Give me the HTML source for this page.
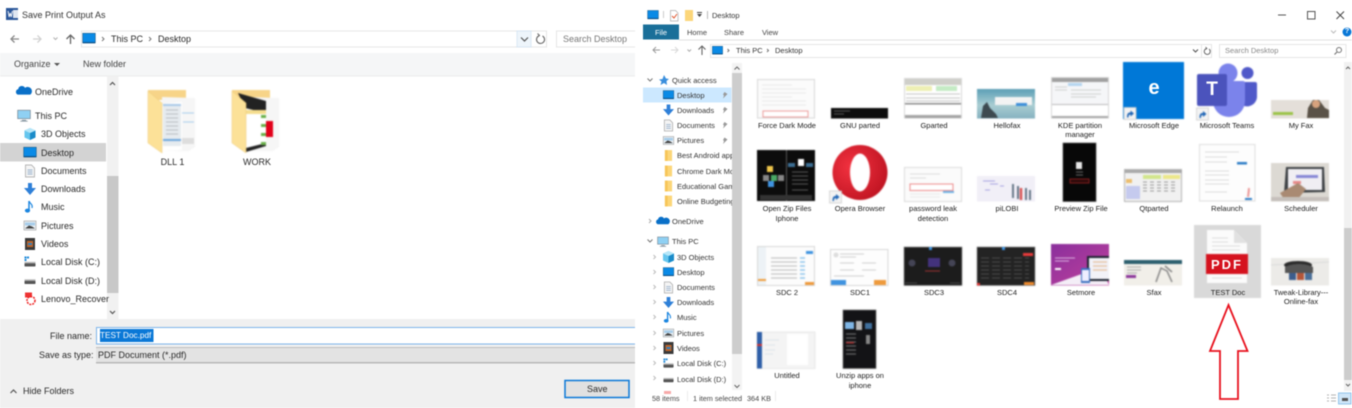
<!DOCTYPE html>
<html lang="en"><head><meta charset="utf-8"><title>Save Print Output As</title>
<style>
html,body{margin:0;padding:0;background:#fff}
#r{position:relative;width:1352px;height:408px;overflow:hidden;background:#fff;font-family:"Liberation Sans",sans-serif;filter:blur(.4px)}
svg{position:absolute;left:0;top:0}
.t{position:absolute;white-space:nowrap;line-height:0;color:#2a2a2a;margin-top:1px}
.a{font-size:9px;margin-top:.2px}
.b{font-size:7.5px;color:#333}
.c{font-size:7.5px;color:#222;transform:translateX(-50%)}
.s{filter:blur(.45px)}
</style></head><body><div id="r">
<svg width="1352" height="408" viewBox="0 0 1352 408" fill="none">
<defs>
<g id="mon"><rect x="-6" y="-5" width="12" height="9" fill="#0a8ae6"/><rect x="-6" y="-5" width="12" height="9" stroke="#22628f" stroke-width=".6"/><rect x="-6" y="3.4" width="12" height="1.2" fill="#0b4f86"/></g>
<g id="dl"><path d="M-2-6h4v5h4L0 6-6-1h4z" fill="#2f80d8"/></g>
<g id="doc"><path d="M-4.5-6h6l3 3v9h-9z" fill="#f4f4f4" stroke="#a0a0a0" stroke-width=".7"/><path d="M-2.5-1h5M-2.5 1h5M-2.5 3h5" stroke="#7a9cc0" stroke-width=".7"/></g>
<g id="pic"><rect x="-6" y="-4.5" width="12" height="9" fill="#e8eef2" stroke="#9a9a9a" stroke-width=".6"/><path d="M-5-3h10v3h-10z" fill="#a7cdea"/><path d="M-5 3l4-3 3 1 3 2z" fill="#444"/></g>
<g id="mus"><path d="M-1-6v9" stroke="#1c86e0" stroke-width="1.5"/><ellipse cx="-2.5" cy="3.6" rx="2.6" ry="2" fill="#1c86e0"/><path d="M-1-6c1 3 4 3 3 7" stroke="#1c86e0" stroke-width="1.2"/></g>
<g id="vid"><rect x="-5" y="-6" width="10" height="12" fill="#3a3a3a"/><rect x="-3" y="-3" width="6" height="6" fill="#c0662a"/><path d="M-2-1h4v2h-4z" fill="#2d7fc1"/></g>
<g id="dc"><rect x="-5.5" y="1" width="11" height="3.5" rx=".8" fill="#555"/><rect x="-5.5" y="-.2" width="11" height="1.5" fill="#bbb"/><path d="M-5.5-5.5h2v2h-2zM-3-5.5h2v2h-2zM-5.5-3h2v2h-2z" fill="#1d88d8"/></g>
<g id="dd"><rect x="-5.5" y="0" width="11" height="3.5" rx=".8" fill="#555"/><rect x="-5.5" y="-1.2" width="11" height="1.5" fill="#bbb"/></g>
<g id="cube"><path d="M0-6l5.5 2.5v7L0 6l-5.5-2.5v-7z" fill="#66c6ee"/><path d="M0-1v7l5.5-2.500v-7z" fill="#1a8bc9"/><path d="M0-1L-5.500-3.500 0-6l5.500 2.500z" fill="#b6e6f8"/></g>
<g id="cl"><path d="M-6 3a2.800 2.800 0 0 1 .5-5.300A3.500 3.500 0 0 1 1-3.500 3 3 0 0 1 6 3z" fill="#0a70c8"/></g>
<g id="pc"><rect x="-6" y="-5" width="12" height="8" fill="#8fd0f3" stroke="#7c8a95" stroke-width=".7"/><path d="M-2 4h4v1h-4zM-3.500 5h7v.8h-7z" fill="#8a9aa5"/></g>
<g id="yf"><path d="M-4-6h8v12h-8z" fill="#fcd679"/><path d="M-4-6h3v12h-3z" fill="#f7c558"/></g>
<g id="sc"><rect x="0" y="0" width="12" height="12" fill="#f3f3f3" stroke="#c9c9c9" stroke-width=".7"/><path d="M3 10c0-4 1-5 3.500-5V3L10 6 6.500 9V7c-1.500 0-2 1-2 3z" fill="#1f65b5"/></g>
<g id="pin"><path d="M-1.500-3l3 2-2 2 -2.500 2.500 1-3-1-1z" fill="#9a9a9a"/></g>
</defs>

<!-- LEFT DIALOG -->
<rect x="6" y="8" width="12" height="12" fill="#2b579a"/><rect x="13" y="10" width="5" height="8" fill="#fff" opacity=".85"/><path d="M8 11l1.200 6 1-4 1 4 1.200-6" stroke="#fff" stroke-width=".9"/>
<path d="M19 39h-8m3.500-3.500L11 39l3.500 3.500" stroke="#8a8a8a" stroke-width="1.300"/>
<path d="M33 39h8m-3.500-3.500L41 39l-3.500 3.500" stroke="#d2d2d2" stroke-width="1.300"/>
<path d="M53.500 37.500l2 2 2-2" stroke="#b0b0b0"/>
<path d="M70.500 44v-9m-4 4l4-4 4 4" stroke="#666" stroke-width="1.300"/>
<rect x="81.500" y="31" width="465" height="16" stroke="#e6e6e6" fill="#fff"/>
<use href="#mon" transform="translate(89,38.500) scale(1.050)"/>
<path d="M102 37l2 2-2 2M149 37l2 2-2 2" stroke="#777"/>
<rect x="517" y="31" width="14" height="16" fill="#eef5fb" stroke="#cfe2f2" stroke-width=".7"/>
<path d="M521 37.500l3.500 3.500 3.500-3.500" stroke="#555" stroke-width="1.200"/>
<path d="M542.500 36a4 4 0 1 1-3.500-.2" stroke="#666" stroke-width="1.100"/><path d="M537.500 33.500l2 2-2 1.500" stroke="#666"/>
<rect x="556.500" y="31" width="79" height="16" stroke="#e6e6e6" fill="#fff"/>
<rect x="0" y="53" width="635" height="23" fill="#f5f6f7"/><rect x="0" y="75.500" width="635" height="1" fill="#ebebeb"/>
<path d="M54 63h6l-3 3z" fill="#555"/>
<rect x="0" y="143" width="106" height="18.500" fill="#d3d3d3"/>
<rect x="107" y="76" width="11.500" height="243" fill="#f1f1f1"/><rect x="107" y="176" width="11.500" height="117" fill="#c8c8c8"/>
<path d="M110 85l2.500-2.500 2.500 2.500M110 311l2.500 2.500 2.500-2.500" stroke="#555" stroke-width="1.200"/>
<use href="#cl" transform="translate(24,91.500) scale(1.050)"/>
<use href="#pc" transform="translate(24,115.500) scale(1.050)"/>
<use href="#cube" transform="translate(30,134)"/>
<use href="#mon" transform="translate(30,152.500) scale(1.050)"/>
<use href="#doc" transform="translate(30,171)"/>
<use href="#dl" transform="translate(30,189)"/>
<use href="#mus" transform="translate(30,207)"/>
<use href="#pic" transform="translate(30,225.500)"/>
<use href="#vid" transform="translate(30,244)"/>
<use href="#dc" transform="translate(30,262)"/>
<use href="#dd" transform="translate(30,280.500)"/>
<g transform="translate(30,298.500)"><rect x="-5" y="-6" width="7" height="5" fill="#e33"/><circle cx="1" cy="2" r="4" stroke="#e22" stroke-width="1.500" stroke-dasharray="2 1"/></g>

<!-- folders -->
<g class="s">
<path d="M148 90h38v10h-38z" fill="#f7d488"/>
<path d="M162 97l33 1v49l-6 4h-27z" fill="#f6f6f6"/>
<path d="M162 104l20-2v48l-20 1z" fill="#fff"/>
<path d="M163 104h18v42h-18z" fill="#e6ebef"/>
<path d="M163 104h18v2h-18z" fill="#a9c9e8"/><path d="M163 139h18v2h-18z" fill="#6fa7dc"/>
<path d="M166 110h12M166 114h12M166 118h12M166 122h12M166 126h12M166 130h12M166 134h12" stroke="#b8bcc0" stroke-width="1"/>
<path d="M182 113h12M183 122h11" stroke="#a8cdee" stroke-width="1"/><rect x="182" y="138" width="12" height="6" fill="#ddd"/>
<path d="M148 91l14 12v50l-14-10z" fill="#fce198"/><path d="M148 91l14 12v50l-14-10z" stroke="#ecc978" stroke-width=".5"/>
</g>
<g class="s">
<path d="M232 90h38v10h-38z" fill="#f7d488"/>
<path d="M246 97l33 1v49l-6 4h-27z" fill="#f6f6f6"/>
<path d="M238 93l28 8v12l-21-5z" fill="#222"/>
<path d="M246 109l20 4v30l-20 6z" fill="#fff"/>
<rect x="246" y="110" width="20" height="4" fill="#f5dd8e"/><path d="M246 148l20-5v3l-20 6z" fill="#222"/>
<rect x="261" y="115" width="5" height="3" fill="#6ab04a"/><rect x="261" y="124" width="5" height="3" fill="#6ab04a"/><rect x="261" y="133" width="5" height="3" fill="#6ab04a"/><rect x="261" y="142" width="5" height="3" fill="#6ab04a"/>
<rect x="266" y="121" width="7" height="16" fill="#e2001a"/>
<path d="M232 91l14 12v50l-14-10z" fill="#fce198"/><path d="M232 91l14 12v50l-14-10z" stroke="#ecc978" stroke-width=".5"/>
</g>

<!-- bottom panel -->
<rect x="0" y="319" width="635" height="89" fill="#f0f0f0"/>
<rect x="96.500" y="327.500" width="539" height="16.500" fill="#fff" stroke="#7eb4ea"/>
<rect x="100" y="329" width="53.500" height="13" fill="#0a78d7"/>
<rect x="96" y="347" width="539" height="16" fill="#e3e3e3"/><rect x="96" y="347" width="539" height="1" fill="#bdbdbd"/><rect x="96" y="362" width="539" height="1.500" fill="#b8b8b8"/>
<path d="M10.500 393l3-3 3 3" stroke="#555" stroke-width="1.200"/>
<rect x="565" y="380.500" width="64" height="17" fill="#e1e1e1" stroke="#0a78d7" stroke-width="1.500"/>

<!-- RIGHT WINDOW -->
<rect x="635" y="0" width="717" height="408" fill="#fff"/>
<use href="#mon" transform="translate(653,15) scale(.9)"/>
<rect x="663" y="11" width="1" height="7" fill="#ccc"/>
<path d="M670.500 10.500h5l2.500 2.500v8h-7.500z" fill="#fff" stroke="#aaa" stroke-width=".7"/><path d="M672 16l2 2 3-4" stroke="#e0552d"/>
<rect x="685" y="10" width="8" height="11" fill="#fcd679"/>
<path d="M697 14h5l-2.500 3z" fill="#444"/><rect x="697" y="12" width="5" height="1" fill="#444"/>
<rect x="707" y="11" width="1" height="8" fill="#bbb"/>
<rect x="643" y="24.500" width="36" height="15" fill="#1a6f99"/>
<rect x="679" y="39.500" width="673" height="1" fill="#e1e1e1"/>
<path d="M1278 15h8" stroke="#555" stroke-width="1"/>
<rect x="1307.500" y="11.500" width="7.500" height="7.500" stroke="#555"/>
<path d="M1336.500 11.500l7.500 7.500m0-7.500l-7.500 7.500" stroke="#444" stroke-width="1"/>
<path d="M1331 30.500l2.500 2.500 2.500-2.500" stroke="#bbb"/>
<circle cx="1347" cy="32" r="4.500" fill="#0a78d7"/>
<path d="M660 50h-7m3-3l-3 3 3 3" stroke="#9a9a9a"/>
<path d="M671 50h7m-3-3l3 3-3 3" stroke="#d8d8d8"/>
<path d="M687.500 49.500l1.800 1.800 1.800-1.800" stroke="#aaa"/>
<path d="M702 55v-9m-3.500 3.500l3.500-3.500 3.500 3.500" stroke="#666" stroke-width="1.100"/>
<rect x="710.500" y="44.500" width="491" height="13" stroke="#e6e6e6" fill="#fff"/>
<rect x="1201.500" y="44.500" width="10" height="13" stroke="#e6e6e6" fill="#fff"/>
<use href="#mon" transform="translate(717.500,50.500) scale(.85)"/>
<path d="M727.500 49l1.500 1.500-1.500 1.500M767 49l1.500 1.500-1.500 1.500" stroke="#777"/>
<path d="M1193 49.500l2.500 2.500 2.500-2.500" stroke="#555" stroke-width="1.100"/>
<path d="M1209 49a3 3 0 1 1-2.500-.5" stroke="#666"/><path d="M1205.500 47l1.500 1.500-1.500 1" stroke="#666" stroke-width=".8"/>
<rect x="1219.500" y="44.500" width="126.500" height="13" stroke="#e6e6e6" fill="#fff"/>
<circle cx="1339" cy="50" r="2.500" stroke="#777"/><path d="M1337 52l-2.500 2.500" stroke="#777" stroke-width="1.200"/>
<rect x="643" y="87.500" width="88.500" height="15" fill="#cce8ff"/>
<rect x="732" y="63" width="10" height="327" fill="#f3f3f3"/><rect x="732" y="73" width="10" height="281" fill="#cdcdcd"/>
<path d="M734.500 69.500l2.500-2.500 2.500 2.500M734.500 385l2.500 2.500 2.500-2.500" stroke="#666"/>
<path d="M647.500 78.500l2.500 2.500 2.500-2.500M647.500 239.500l2.500 2.500 2.500-2.500" stroke="#777"/>
<path d="M649 219l2 2-2 2" stroke="#aaa"/>
<g stroke="#bbb"><path d="M653.500 255l2 2-2 2M653.500 270l2 2-2 2M653.500 285l2 2-2 2M653.500 300l2 2-2 2M653.500 315l2 2-2 2M653.500 331l2 2-2 2M653.500 346l2 2-2 2M653.500 361l2 2-2 2M653.500 376l2 2-2 2"/></g>
<path d="M664 75l2 3.500 3 .5-2.500 2 .5 4-3-2-3.500 2 1-3.500-2.500-2 3.500-.5z" fill="#3a8fdd"/>
<use href="#mon" transform="translate(668.500,95) scale(.88)"/>
<use href="#dl" transform="translate(668.500,110) scale(.92)"/>
<use href="#doc" transform="translate(668.500,125.500) scale(.92)"/>
<use href="#pic" transform="translate(668.500,140.500) scale(.88)"/>
<use href="#yf" transform="translate(668.500,155.500) scale(.9)"/>
<use href="#yf" transform="translate(668.500,171) scale(.9)"/>
<use href="#yf" transform="translate(668.500,186) scale(.9)"/>
<use href="#yf" transform="translate(668.500,201) scale(.9)"/>
<use href="#pin" transform="translate(726,95)"/><use href="#pin" transform="translate(726,110)"/><use href="#pin" transform="translate(726,125)"/><use href="#pin" transform="translate(726,140.500)"/>
<use href="#cl" transform="translate(663,221.500) scale(.9)"/>
<use href="#pc" transform="translate(663,241.500) scale(.9)"/>
<use href="#cube" transform="translate(668.500,257)"/>
<use href="#mon" transform="translate(668.500,272) scale(.88)"/>
<use href="#doc" transform="translate(668.500,287.500) scale(.92)"/>
<use href="#dl" transform="translate(668.500,302.500) scale(.92)"/>
<use href="#mus" transform="translate(668.500,317.500) scale(.92)"/>
<use href="#pic" transform="translate(668.500,333) scale(.88)"/>
<use href="#vid" transform="translate(668.500,348)"/>
<use href="#dc" transform="translate(668.500,363.500) scale(.92)"/>
<use href="#dd" transform="translate(668.500,379) scale(.92)"/>
<g transform="translate(664,391)"><rect x="0" y="0" width="7" height="3" fill="#f7a9a9"/></g>
<rect x="687" y="391" width="1" height="10" fill="#ececec"/><rect x="775" y="391" width="1" height="10" fill="#ececec"/>

<!-- right scrollbar -->
<rect x="1344" y="62" width="8" height="329" fill="#f1f1f1"/><rect x="1344" y="228" width="8" height="152" fill="#cdcdcd"/>
<path d="M1346 69l2-2 2 2M1346 384l2 2 2-2" stroke="#666"/>
<g stroke="#999" stroke-width=".8"><path d="M1327 395h2M1327 398h2M1327 401h2M1331 395h5M1331 398h5M1331 401h5"/></g>
<rect x="1338.500" y="393" width="12.500" height="11" fill="#cfe6f8" stroke="#7fb9e6" stroke-width=".8"/><path d="M1342 398h6v3h-6z" fill="#555"/>

<g class="s">
<!-- ROW 1 -->
<g stroke="#d8d8d8" stroke-width="1">
<rect x="757.500" y="79.500" width="57" height="38.500" fill="#fbfbfb"/>
<rect x="904.500" y="78.500" width="57" height="39.500" fill="#fff"/>
<rect x="1051.500" y="77.500" width="57" height="40.500" fill="#fff"/>
</g>
<path d="M762 85h30M762 89h44M762 93h44M762 97h30M762 101h44M762 105h44" stroke="#e8e8e8"/>
<rect x="763" y="111" width="45" height="6" stroke="#ec9c9b" fill="#fff"/>
<rect x="831" y="108" width="57" height="10.500" fill="#0d0d0d"/><path d="M834 111h16M834 114h10" stroke="#555"/>
<rect x="905" y="79" width="56" height="6" fill="#cfcfc9"/><rect x="906" y="86" width="26" height="5" fill="#eef0b4"/><rect x="936" y="86" width="21" height="5" fill="#c5ebc5"/>
<path d="M906 94h54M906 98h54M906 101h54" stroke="#c4c4c4"/><rect x="905" y="103" width="56" height="1.500" fill="#888"/><rect x="905" y="115" width="56" height="3" fill="#a5a5a5"/>
<defs><linearGradient id="hf" x1="0" y1="0" x2="0" y2="1"><stop offset="0" stop-color="#5c9fb6"/><stop offset=".55" stop-color="#a9cdd2"/><stop offset="1" stop-color="#86b2c0"/></linearGradient></defs>
<rect x="977" y="89" width="58" height="29.500" fill="url(#hf)"/>
<rect x="995" y="97" width="37" height="8" fill="#f3f3f3"/><rect x="1016" y="103" width="11" height="3" fill="#3f8fd9"/><path d="M981 118l2-12 4-4 3 6 6 6 2 4z" fill="#3d4a50"/>
<rect x="1052" y="78" width="56" height="4" fill="#a0a0a0"/><rect x="1052" y="82" width="56" height="22" fill="#f5f6f8"/><rect x="1068" y="83" width="14" height="3" fill="#b6d6f0"/><path d="M1055 87h12M1055 90h12M1071 90h30M1071 94h30M1071 97h25" stroke="#d0d0d0"/><rect x="1052" y="104" width="56" height="1" fill="#bbb"/><rect x="1052" y="116" width="56" height="2" fill="#aaa"/>
<rect x="1123" y="62" width="61" height="57" fill="#0078d7"/>
<use href="#sc" transform="translate(1124,107.500)"/>
<rect x="1271" y="100" width="58" height="18.500" fill="#e4dfd9"/><rect x="1273" y="112" width="20" height="3" fill="#9cc44a"/><path d="M1307 118l1-10 5-8h6l6 8 4 2v8z" fill="#5a5247"/><circle cx="1316" cy="104" r="4" fill="#d6a27e"/>
<!-- teams -->
<circle cx="1247.500" cy="73" r="6" fill="#5059c9"/>
<path d="M1242 82h13a2 2 0 0 1 2 2v13a10 10 0 0 1-15 8z" fill="#5059c9"/>
<circle cx="1228" cy="73" r="9.500" fill="#7b83eb"/>
<path d="M1213 81h30a2 2 0 0 1 2 2v18a16 16 0 0 1-32 0z" fill="#7b83eb"/>
<rect x="1197" y="74" width="30" height="32" rx="2" fill="#4b53bc"/>
<use href="#sc" transform="translate(1196.500,108)"/>

<!-- ROW 2 -->
<rect x="757" y="150" width="58" height="51" fill="#0c0c0c"/><rect x="786" y="150" width="1" height="51" fill="#555"/>
<rect x="767" y="166" width="6" height="6" fill="#f1c84c"/><rect x="763" y="175" width="6" height="6" fill="#888"/><rect x="771" y="175" width="6" height="6" fill="#4aa866"/><rect x="778" y="175" width="6" height="6" fill="#888"/><rect x="768" y="181" width="6" height="6" fill="#3f93e0"/><rect x="798" y="159" width="6" height="7" fill="#fff"/><rect x="788" y="163" width="7" height="4" fill="#3b6d92"/><rect x="806" y="163" width="7" height="4" fill="#3b6d92"/><path d="M792 172h16M792 176h16M792 180h16M792 184h16M792 190h16" stroke="#555"/><rect x="760" y="195" width="52" height="5" fill="#333"/>
<defs><radialGradient id="op" cx=".35" cy=".4" r=".8"><stop offset="0" stop-color="#f33240"/><stop offset="1" stop-color="#b70f1d"/></radialGradient></defs>
<ellipse cx="860" cy="172.500" rx="27.500" ry="27.500" fill="url(#op)"/>
<ellipse cx="860" cy="172.500" rx="10" ry="19" fill="#fff"/>
<use href="#sc" transform="translate(829.500,191)"/>
<rect x="904.500" y="167.500" width="57" height="34" fill="#fbfbfb" stroke="#dcdcdc"/>
<path d="M910 174h30M910 178h16" stroke="#ddd"/><rect x="910" y="184" width="43" height="6.500" fill="#fff" stroke="#ec8b8b"/><rect x="943" y="191" width="11" height="2" fill="#6fb3e6"/><path d="M910 194h30M910 197h30" stroke="#e8e8e8"/>
<rect x="977" y="176" width="58" height="25.500" fill="#f1eff7"/>
<path d="M983 181h12M990 184h8M985 190h5M1000 186h4" stroke="#a8a4e2"/><path d="M1013 184v14M1018 186v13M1026 188v12M1030 190v10" stroke="#678" stroke-width="2"/><path d="M1021 188v12" stroke="#d85555" stroke-width="2.500"/>
<rect x="1063" y="143" width="33" height="58.500" fill="#080808" stroke="#444" stroke-width=".6"/>
<rect x="1076" y="162" width="6" height="7" fill="#e8e8e8"/><path d="M1076 172h7M1076 175h7" stroke="#666"/><rect x="1070" y="179" width="19" height="4" stroke="#9b2222" fill="#2a0a0a" stroke-width=".8"/>
<rect x="1124.500" y="169.500" width="57" height="32" fill="#f1f1f1" stroke="#b5b5b5"/>
<rect x="1125" y="170" width="57" height="3" fill="#a9a9a9"/><rect x="1143" y="175" width="18" height="4" fill="#d2e68c"/><rect x="1163" y="175" width="17" height="4" fill="#ece88a"/><rect x="1126" y="186" width="14" height="13" fill="#c5caee"/><rect x="1126" y="179" width="6" height="4" fill="#ecbe6e"/><path d="M1143 182h34M1143 185h34M1143 188h34M1143 191h34" stroke="#999" stroke-dasharray="4 3"/>
<rect x="1199.500" y="144.500" width="55.500" height="56.500" fill="#fdfdfd" stroke="#dedede"/>
<path d="M1205 152h34M1205 157h22M1205 162h22M1205 171h24M1205 175h24M1205 180h24M1205 184h24M1205 192h22" stroke="#dcdcdc"/><rect x="1237" y="162" width="10" height="2.500" fill="#2f7ec7"/><path d="M1249 190l-1 7 1-9" stroke="#ec9b9b" stroke-width="2"/><rect x="1245" y="198" width="7" height="2" fill="#2f7ec7"/>
<rect x="1271" y="163" width="58" height="38.500" fill="#dcd9d3"/><path d="M1286 167h38l1 25-41 1z" fill="#3e4245"/><path d="M1288 169h34v21h-34z" fill="#f0eef3"/><rect x="1296" y="175" width="22" height="3" fill="#8888d6"/><rect x="1293" y="181" width="8" height="3" fill="#e88a8a"/><path d="M1280 193l18-10 8 6-8 10h-14z" fill="#a98a73"/><rect x="1271" y="197" width="58" height="4" fill="#c5c0bb"/>

<!-- ROW 3 -->
<rect x="757.500" y="246.500" width="57" height="39" fill="#fcfcfc" stroke="#d8d8d8"/>
<rect x="758" y="247" width="8" height="38" fill="#edf2f6"/><rect x="758" y="279" width="8" height="2" fill="#f0a040"/><path d="M771 258h26M771 262h26M771 266h26M771 270h26M771 274h26M771 278h26" stroke="#c4c4c4" stroke-width="1.200"/><path d="M800 258h5M800 262h5M800 266h5M800 270h5M800 274h5M800 278h5" stroke="#8fc5ec" stroke-width="1.500"/><rect x="805" y="282" width="9" height="3" fill="#ee9a3c"/><rect x="806" y="251" width="7" height="3" fill="#3f93e0"/>
<rect x="830.500" y="249.500" width="57.500" height="36" fill="#fdfdfd" stroke="#d8d8d8"/>
<rect x="831" y="280" width="15" height="5" fill="#3f93e0"/><rect x="874" y="280" width="12" height="5" fill="#ee9a3c"/><path d="M840 254h24M840 257h16M840 263h14M862 263h14M840 270h14M862 270h14M834 276h30" stroke="#d0d0d0"/><circle cx="836" cy="255" r="2.500" fill="#ddd"/>
<rect x="904" y="247" width="58" height="38.500" fill="#1c1c1c" stroke="#8a8a8a" stroke-width=".6"/>
<rect x="928" y="258" width="12" height="9" fill="#43327c"/><circle cx="912" cy="263" r="3.500" fill="#445"/><circle cx="952" cy="263" r="3.500" fill="#445"/><rect x="929" y="247" width="3" height="3" fill="#3f93e0"/><path d="M925 271h15" stroke="#933"/><path d="M905 283h12M950 283h10" stroke="#444"/>
<rect x="977" y="247" width="58" height="38.500" fill="#232323" stroke="#8a8a8a" stroke-width=".6"/>
<path d="M981 258h48M981 262h48M981 266h48M981 270h48M981 274h48M981 278h48" stroke="#4a4a4a" stroke-dasharray="8 3"/><rect x="1023" y="253" width="10" height="3" fill="#e63a3a"/><rect x="1024" y="282" width="10" height="3" fill="#ee8a2c"/><rect x="1002" y="247" width="3" height="3" fill="#3f93e0"/><rect x="977" y="283" width="3" height="2.500" fill="#e63a3a"/>
<defs><linearGradient id="sm" x1="0" y1="0" x2="1" y2="1"><stop offset="0" stop-color="#8a2f9c"/><stop offset="1" stop-color="#c0419c"/></linearGradient></defs>
<rect x="1051" y="244" width="58" height="41.500" fill="url(#sm)"/><path d="M1051 285l50-18 8 18z" fill="#f4eef7"/>
<rect x="1087" y="256" width="22" height="25" fill="#1d2330"/><rect x="1089" y="258" width="20" height="21" fill="#f2f2f8"/><rect x="1081" y="268" width="9" height="15" fill="#3a6fc0"/><rect x="1082" y="270" width="7" height="11" fill="#eef"/><path d="M1055 258h20M1055 261h14" stroke="#d9b0e0"/><rect x="1055" y="268" width="6" height="2" fill="#fff"/><path d="M1093 262h14M1093 266h14M1093 270h14" stroke="#e8c5a8" stroke-width="1.500"/>
<rect x="1124" y="260" width="58" height="25.500" fill="#f1efe9"/><rect x="1124" y="260" width="58" height="4" fill="#2d5f6e"/><rect x="1126" y="275" width="10" height="3" fill="#8d3a9c"/><path d="M1127 267h14M1127 270h14M1127 273h10" stroke="#aaa"/><path d="M1156 282l5-14 6 3 5 11M1165 266l7 6" stroke="#888" stroke-width="1.500"/>
<!-- selected PDF -->
<rect x="1194" y="225" width="67" height="73" fill="#d9d9d9"/>
<path d="M1207 230h27l13 13v40h-40z" fill="#fbfbfb"/><path d="M1234 230l13 13h-13z" fill="#e1e1e1"/>
<path d="M1212 238h16M1212 242h16M1212 246h28M1212 250h28M1212 278h30" stroke="#dcdcdc"/>
<rect x="1206" y="254" width="42" height="20" fill="#d5121e"/>
<rect x="1271" y="258" width="58" height="27.500" fill="#ecebe8"/><path d="M1271 265l58-3" stroke="#dbdbdb"/>
<ellipse cx="1298" cy="265" rx="14" ry="4" fill="#2b2b2b"/><path d="M1285 267c8-4 20-4 28 0v6h-28z" fill="#555"/>
<rect x="1289" y="273" width="7" height="7" fill="#3d5d8c"/><rect x="1297" y="273" width="7" height="7" fill="#b4563a"/><rect x="1305" y="273" width="7" height="7" fill="#4a6e98"/>

<!-- ROW 4 -->
<rect x="757" y="332" width="58" height="36.500" fill="#f4f4f4" stroke="#dcdcdc" stroke-width=".6"/><rect x="757" y="332" width="5" height="36.500" fill="#2f5fa8"/><rect x="757" y="344" width="5" height="2" fill="#c33"/><rect x="787" y="334" width="21" height="31" fill="#fff"/><path d="M765 340h14M765 345h10M765 350h10M765 354h8" stroke="#dde4ea"/>
<rect x="843" y="310" width="33" height="58.500" fill="#131316" stroke="#666" stroke-width=".6"/>
<rect x="845" y="322" width="9" height="7" fill="#7fb6e6"/><rect x="856" y="321" width="6" height="9" fill="#b8b8b8"/><rect x="865" y="323" width="7" height="6" fill="#3f6f9c"/>
<path d="M846 334h10M846 338h10M846 342h10M846 346h10M846 350h10M846 354h10" stroke="#666" stroke-width="1.200"/><rect x="866" y="335" width="4" height="9" fill="#888"/><rect x="846" y="342" width="8" height="1.500" fill="#a33"/>
</g>
<!-- arrow -->
<path d="M1228.500 305L1247.500 351H1238V399H1220V351H1210z" fill="#fff" stroke="#e8121e" stroke-width="1.800"/>
</svg>

<!-- LEFT TEXT -->
<div class="t a" style="left:22px;top:15px;color:#333">Save Print Output As</div>
<div class="t a" style="left:111px;top:39px">This PC</div>
<div class="t a" style="left:158px;top:39px">Desktop</div>
<div class="t a" style="left:563px;top:39px;color:#777">Search Desktop</div>
<div class="t a" style="left:14px;top:64px;color:#444">Organize</div>
<div class="t a" style="left:83px;top:64px;color:#444">New folder</div>
<div class="t a" style="left:35px;top:91.500px">OneDrive</div>
<div class="t a" style="left:35px;top:115.500px">This PC</div>
<div class="t a" style="left:41px;top:134px">3D Objects</div>
<div class="t a" style="left:41px;top:152.500px">Desktop</div>
<div class="t a" style="left:41px;top:171px">Documents</div>
<div class="t a" style="left:41px;top:189px">Downloads</div>
<div class="t a" style="left:41px;top:207px">Music</div>
<div class="t a" style="left:41px;top:225.500px">Pictures</div>
<div class="t a" style="left:41px;top:244px">Videos</div>
<div class="t a" style="left:41px;top:262px">Local Disk (C:)</div>
<div class="t a" style="left:41px;top:280.500px">Local Disk (D:)</div>
<div class="t a" style="left:41px;top:298.500px">Lenovo_Recover</div>
<div class="t a" style="left:172.500px;top:161.500px;transform:translateX(-50%)">DLL 1</div>
<div class="t a" style="left:257px;top:161.500px;transform:translateX(-50%)">WORK</div>
<div class="t a" style="left:50px;top:336px">File name:</div>
<div class="t a" style="left:39px;top:355px">Save as type:</div>
<div class="t a" style="left:100px;top:335.500px;color:#fff;font-size:8.200px">TEST Doc.pdf</div>
<div class="t a" style="left:98px;top:355px">PDF Document (*.pdf)</div>
<div class="t a" style="left:23px;top:391px">Hide Folders</div>
<div class="t a" style="left:587px;top:388.500px">Save</div>

<!-- RIGHT TEXT -->
<div class="t b" style="left:712px;top:15px">Desktop</div>
<div class="t" style="left:661px;top:32px;font-size:7.500px;color:#fff;transform:translateX(-50%)">File</div>
<div class="t" style="left:697px;top:32px;font-size:7.500px;color:#444;transform:translateX(-50%)">Home</div>
<div class="t" style="left:734px;top:32px;font-size:7.500px;color:#444;transform:translateX(-50%)">Share</div>
<div class="t" style="left:770px;top:32px;font-size:7.500px;color:#444;transform:translateX(-50%)">View</div>
<div class="t b" style="left:736px;top:50px">This PC</div>
<div class="t b" style="left:775px;top:50px">Desktop</div>
<div class="t b" style="left:1225px;top:50px;color:#888">Search Desktop</div>
<div class="t" style="left:1347px;top:31px;font-size:7px;font-weight:bold;color:#fff;transform:translateX(-50%)">?</div>
<div class="t b" style="left:672px;top:79.500px">Quick access</div>
<div class="t b" style="left:677px;top:94.500px">Desktop</div>
<div class="t b" style="left:677px;top:109.500px">Downloads</div>
<div class="t b" style="left:677px;top:125px">Documents</div>
<div class="t b" style="left:677px;top:140px">Pictures</div>
<div style="position:absolute;left:677px;top:149px;width:55px;height:60px;overflow:hidden">
<div class="t b" style="left:0;top:6px">Best Android apps</div>
<div class="t b" style="left:0;top:21.500px">Chrome Dark Mode</div>
<div class="t b" style="left:0;top:36.500px">Educational Games</div>
<div class="t b" style="left:0;top:51.500px">Online Budgeting</div>
</div>
<div class="t b" style="left:672px;top:221px">OneDrive</div>
<div class="t b" style="left:672px;top:241px">This PC</div>
<div class="t b" style="left:677px;top:256.500px">3D Objects</div>
<div class="t b" style="left:677px;top:271.500px">Desktop</div>
<div class="t b" style="left:677px;top:287px">Documents</div>
<div class="t b" style="left:677px;top:302px">Downloads</div>
<div class="t b" style="left:677px;top:317px">Music</div>
<div class="t b" style="left:677px;top:332.500px">Pictures</div>
<div class="t b" style="left:677px;top:347.500px">Videos</div>
<div class="t b" style="left:677px;top:363px">Local Disk (C:)</div>
<div class="t b" style="left:677px;top:378.500px">Local Disk (D:)</div>
<div class="t" style="left:652px;top:398px;font-size:7.300px;color:#444">58 items</div>
<div class="t" style="left:693px;top:398px;font-size:7.300px;color:#444">1 item selected</div>
<div class="t" style="left:747px;top:398px;font-size:7.300px;color:#444">364 KB</div>

<div class="t c" style="left:787px;top:124.500px">Force Dark Mode</div>
<div class="t c" style="left:860px;top:124.500px">GNU parted</div>
<div class="t c" style="left:934px;top:124.500px">Gparted</div>
<div class="t c" style="left:1007px;top:124.500px">Hellofax</div>
<div class="t c" style="left:1080px;top:124.500px">KDE partition</div>
<div class="t c" style="left:1080px;top:134px">manager</div>
<div class="t c" style="left:1154px;top:124.500px">Microsoft Edge</div>
<div class="t c" style="left:1227px;top:124.500px">Microsoft Teams</div>
<div class="t c" style="left:1301px;top:124.500px">My Fax</div>
<div class="t" style="left:1154px;top:87px;font-size:20px;font-weight:bold;color:#fff;transform:translateX(-50%)">e</div>
<div class="t" style="left:1212px;top:89px;font-size:19px;font-weight:bold;color:#fff;transform:translateX(-50%)">T</div>

<div class="t c" style="left:787px;top:208px">Open Zip Files</div>
<div class="t c" style="left:787px;top:217.500px">Iphone</div>
<div class="t c" style="left:860px;top:208px">Opera Browser</div>
<div class="t c" style="left:933px;top:208px">password leak</div>
<div class="t c" style="left:933px;top:217.500px">detection</div>
<div class="t c" style="left:1007px;top:208px">piLOBI</div>
<div class="t c" style="left:1081px;top:208px">Preview Zip File</div>
<div class="t c" style="left:1154px;top:208px">Qtparted</div>
<div class="t c" style="left:1227px;top:208px">Relaunch</div>
<div class="t c" style="left:1301px;top:208px">Scheduler</div>

<div class="t c" style="left:787px;top:291.500px">SDC 2</div>
<div class="t c" style="left:860px;top:291.500px">SDC1</div>
<div class="t c" style="left:934px;top:291.500px">SDC3</div>
<div class="t c" style="left:1007px;top:291.500px">SDC4</div>
<div class="t c" style="left:1081px;top:291.500px">Setmore</div>
<div class="t c" style="left:1154px;top:291.500px">Sfax</div>
<div class="t c" style="left:1228px;top:291.500px">TEST Doc</div>
<div class="t c" style="left:1301px;top:291.500px">Tweak-Library---</div>
<div class="t c" style="left:1301px;top:301px">Online-fax</div>
<div class="t" style="left:1227px;top:263.500px;font-size:13px;font-weight:bold;letter-spacing:2px;color:#fff;transform:translateX(-50%)">PDF</div>

<div class="t c" style="left:787px;top:374.500px">Untitled</div>
<div class="t c" style="left:860px;top:374.500px">Unzip apps on</div>
<div class="t c" style="left:860px;top:384.500px">iphone</div>
</div></body></html>
